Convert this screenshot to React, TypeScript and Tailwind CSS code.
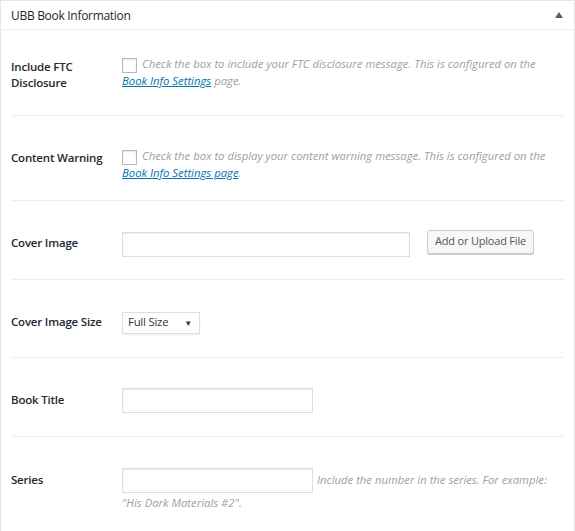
import React from "react";

const font = { fontFamily: '"Open Sans", "Noto Sans", sans-serif' };

function Checkbox() {
  return (
    <span className="mt-[2px] inline-block h-[15px] w-[15px] shrink-0 border border-[#b4b9be] bg-white shadow-[inset_0_1px_2px_rgba(0,0,0,0.1)]" />
  );
}

function Label({ children, mt }: { children: React.ReactNode; mt: string }) {
  return (
    <div className={`w-[111px] shrink-0 text-[11.5px] font-semibold leading-[15.5px] tracking-[-0.2px] text-[#23282d] ${mt}`}>
      {children}
    </div>
  );
}

export default function App() {
  return (
    <div className="h-[531px] w-[575px] overflow-hidden bg-white" style={font}>
      <div className="w-[575px] border border-[#e5e5e5] bg-white shadow-[0_1px_1px_rgba(0,0,0,0.04)]">
        <div className="flex h-[29px] items-center justify-between border-b border-[#eeeeee] pl-[10px] pr-[11px]">
          <span className="mt-[1px] text-[12px] tracking-[-0.3px] text-[#23282d]">UBB Book Information</span>
          <svg width="8" height="6" viewBox="0 0 8 6">
            <path d="M4 0 L8 6 L0 6 Z" fill="#555d66" />
          </svg>
        </div>
        <div className="px-[10px]">
          {/* Row 1 */}
          <div className="flex items-start border-b border-[#eeeeee] pb-[25px] pt-[26px]">
            <Label mt="mt-[3px]">
              Include FTC
              <br />
              Disclosure
            </Label>
            <div className="text-[11.3px] italic leading-[16.5px] text-[#a0a0a0]">
              <div className="flex items-start gap-[5px] whitespace-nowrap">
                <Checkbox />
                <span>Check the box to include your FTC disclosure message. This is configured on the</span>
              </div>
              <div className="whitespace-nowrap">
                <span className="text-[#0073aa] underline">Book Info Settings</span> page.
              </div>
            </div>
          </div>
          {/* Row 2 */}
          <div className="flex items-start border-b border-[#eeeeee] pb-[18px] pt-[32px]">
            <Label mt="mt-[2px]">Content Warning</Label>
            <div className="text-[11.3px] italic leading-[16.5px] text-[#a0a0a0]">
              <div className="flex items-start gap-[5px] whitespace-nowrap">
                <Checkbox />
                <span>Check the box to display your content warning message. This is configured on the</span>
              </div>
              <div className="whitespace-nowrap">
                <span className="text-[#0073aa] underline">Book Info Settings page</span>.
              </div>
            </div>
          </div>
          {/* Row 3 */}
          <div className="flex items-start border-b border-[#eeeeee] pb-[22px] pt-[31px]">
            <Label mt="mt-[3px]">Cover Image</Label>
            <div className="flex items-start gap-[17px]">
              <div className="h-[25px] w-[288px] border border-[#dddddd] bg-white shadow-[inset_0_1px_2px_rgba(0,0,0,0.07)]" />
              <button className="-mt-[2px] h-[24px] w-[107px] rounded-[3px] border border-[#cccccc] bg-[#f7f7f7] text-[11px] tracking-[-0.2px] text-[#555555] shadow-[0_1px_0_#cccccc]">
                Add or Upload File
              </button>
            </div>
          </div>
          {/* Row 4 */}
          <div className="flex items-start border-b border-[#eeeeee] pb-[23px] pt-[32px]">
            <Label mt="mt-[2px]">Cover Image Size</Label>
            <div className="flex h-[22px] w-[78px] items-center justify-between border border-[#dddddd] bg-white pl-[5px] pr-[7px] text-[11.3px] tracking-[-0.2px] text-[#32373c] shadow-[0_1px_2px_rgba(0,0,0,0.07)]">
              <span>Full Size</span>
              <span className="text-[8px]">▼</span>
            </div>
          </div>
          {/* Row 5 */}
          <div className="flex items-start border-b border-[#eeeeee] pb-[23px] pt-[30px]">
            <Label mt="mt-[4px]">Book Title</Label>
            <div className="h-[25px] w-[191px] border border-[#dddddd] bg-white shadow-[inset_0_1px_2px_rgba(0,0,0,0.07)]" />
          </div>
          {/* Row 6 */}
          <div className="flex items-start border-b border-[#eeeeee] pb-[20px] pt-[31px]">
            <Label mt="mt-[4px]">Series</Label>
            <div className="text-[11.3px] italic leading-[16.5px] text-[#a0a0a0]">
              <div className="flex items-center gap-[4px] whitespace-nowrap">
                <div className="h-[25px] w-[191px] border border-[#dddddd] bg-white shadow-[inset_0_1px_2px_rgba(0,0,0,0.07)]" />
                <span className="mt-[1px]">Include the number in the series. For example:</span>
              </div>
              <div className="mt-[2px] whitespace-nowrap">"His Dark Materials #2".</div>
            </div>
          </div>
          <div className="h-[40px]" />
        </div>
      </div>
    </div>
  );
}
